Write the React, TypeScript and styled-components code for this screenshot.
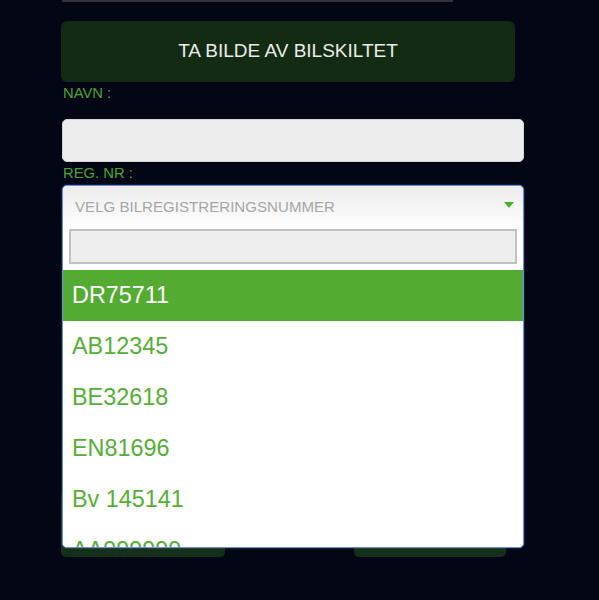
import React from "react";
import styled, { createGlobalStyle } from "styled-components";

const Global = createGlobalStyle`
  html, body { margin: 0; padding: 0; background: #030715; }
  body { font-family: "Liberation Sans", Helvetica, Arial, sans-serif; overflow: hidden; }
`;

const Page = styled.div`
  width: 599px;
  height: 600px;
  background: #030715;
  padding-left: 62px;
  box-sizing: border-box;
  display: flex;
  flex-direction: column;
  align-items: flex-start;
`;

const TopStub = styled.div`
  width: 391px;
  height: 2px;
  background: #32333d;
`;

const PrimaryButton = styled.div`
  margin-top: 19px;
  margin-left: -1px;
  width: 454px;
  height: 61px;
  border-radius: 6px;
  background: #132b12;
  color: #ececec;
  font-size: 19px;
  display: flex;
  align-items: center;
  justify-content: center;
  padding-bottom: 2px;
  box-sizing: border-box;
`;

const Label = styled.div<{ $gap?: number }>`
  height: 23px;
  line-height: 23px;
  margin-left: 1px;
  font-size: 14.8px;
  color: #4aa52c;
  margin-bottom: ${(p) => p.$gap ?? 0}px;
`;

const TextInput = styled.div`
  width: 462px;
  height: 43px;
  box-sizing: border-box;
  border-radius: 5px;
  background: #ededed;
  border: 1px solid #d4d4d4;
`;

const SelectWrap = styled.div`
  position: relative;
  width: 462px;
  height: 44px;
`;

const Panel = styled.div`
  position: absolute;
  left: 0;
  top: 0;
  z-index: 5;
  width: 462px;
  height: 363px;
  box-sizing: border-box;
  border: 1px solid #6a8cdb;
  border-radius: 5px;
  background: #ffffff;
  overflow: hidden;
  display: flex;
  flex-direction: column;
  box-shadow: 0 0 2px rgba(120, 150, 230, 0.6);
`;

const Header = styled.div`
  height: 43px;
  flex: none;
  display: flex;
  align-items: center;
  justify-content: space-between;
  padding: 0 9px 2px 12px;
  box-sizing: border-box;
  background: linear-gradient(#ececec, #ffffff);
  color: #a6a6a6;
  font-size: 15.1px;
`;

const Arrow = styled.svg`
  width: 10px;
  height: 6px;
  margin-top: -4px;
  flex: none;
`;

const SearchBox = styled.div`
  flex: none;
  height: 35px;
  margin: 0 6px 6px 6px;
  box-sizing: border-box;
  border: 2px solid #c2c2c2;
  background: #eeeeee;
`;

const Option = styled.div<{ $active?: boolean }>`
  flex: none;
  height: 51px;
  display: flex;
  align-items: center;
  padding-left: 9px;
  font-size: 23.4px;
  background: ${(p) => (p.$active ? "#54ab31" : "#ffffff")};
  color: ${(p) => (p.$active ? "#ffffff" : "#54b034")};
`;

const ButtonRow = styled.div`
  margin-top: 263px;
  margin-left: -1px;
  width: 445px;
  display: flex;
  justify-content: space-between;
`;

const SmallButton = styled.div<{ $w: number }>`
  width: ${(p) => p.$w}px;
  height: 65px;
  border-radius: 5px;
  background: #15301a;
`;

const options = ["DR75711", "AB12345", "BE32618", "EN81696", "Bv 145141", "AA999999"];

export default function App() {
  return (
    <>
      <Global />
      <Page>
        <TopStub />
        <PrimaryButton>TA BILDE AV BILSKILTET</PrimaryButton>
        <Label $gap={14}>NAVN :</Label>
        <TextInput />
        <Label>REG. NR :</Label>
        <SelectWrap>
          <Panel>
            <Header>
              <span>VELG BILREGISTRERINGSNUMMER</span>
              <Arrow viewBox="0 0 10 6">
                <polygon points="0,0 10,0 5,6" fill="#4caf30" />
              </Arrow>
            </Header>
            <SearchBox />
            {options.map((o, i) => (
              <Option key={o} $active={i === 0}>
                {o}
              </Option>
            ))}
          </Panel>
        </SelectWrap>
        <ButtonRow>
          <SmallButton $w={164} />
          <SmallButton $w={152} />
        </ButtonRow>
      </Page>
    </>
  );
}
